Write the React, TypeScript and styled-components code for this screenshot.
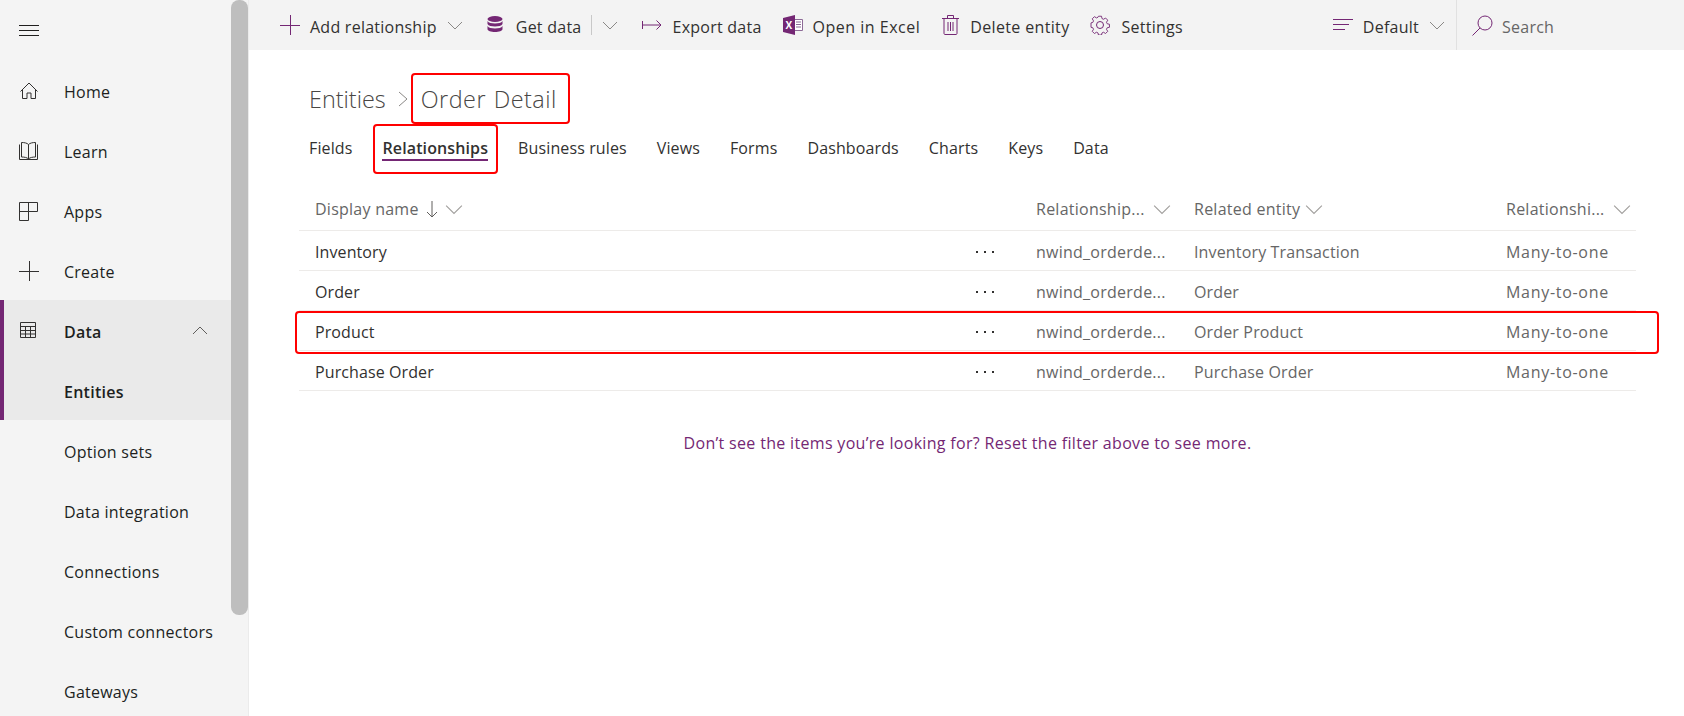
import React from "react";
import styled, { createGlobalStyle } from "styled-components";

const purple = "#742774";

const GlobalStyle = createGlobalStyle`
  html, body {
    margin: 0;
    padding: 0;
    height: 100%;
    overflow: hidden;
    background: #fff;
    font-family: "Open Sans", "Noto Sans", sans-serif;
    font-size: 16px;
    letter-spacing: 0.25px;
  }
  * { box-sizing: border-box; }
`;

const Page = styled.div`
  display: flex;
  width: 1684px;
  height: 716px;
  overflow: hidden;
`;

const Sidebar = styled.aside`
  display: flex;
  flex: 0 0 249px;
  height: 716px;
  overflow: hidden;
  background: #f4f4f4;
  border-right: 1px solid #ebebeb;
`;

const NavList = styled.nav`
  flex: 1 0 0;
  min-width: 0;
`;

const ScrollTrack = styled.div`
  flex: 0 0 17px;
`;

const ScrollThumb = styled.div`
  height: 615px;
  background: #bebebe;
  border-radius: 8px;
`;

const NavRow = styled.div<{ $active?: boolean; $bold?: boolean }>`
  display: flex;
  align-items: center;
  height: 60px;
  padding-top: 2px;
  padding-left: ${(p) => (p.$active ? "15px" : "19px")};
  padding-right: 23px;
  white-space: nowrap;
  font-weight: ${(p) => (p.$bold ? 600 : 400)};
  color: #201f1e;
  background: ${(p) => (p.$active ? "#eaeaea" : "transparent")};
  border-left: ${(p) => (p.$active ? `4px solid ${purple}` : "0")};
`;

const MenuRow = styled(NavRow)`
  padding-top: 0;
`;

const NavIcon = styled.div`
  display: flex;
  flex: 0 0 45px;
  color: #323130;
`;

const NavLabel = styled.span`
  flex: 1 0 0;
  padding-top: 1px;
`;

const Main = styled.main`
  display: flex;
  flex-direction: column;
  flex: 1 0 0;
  min-width: 0;
`;

const Toolbar = styled.header`
  display: flex;
  align-items: center;
  flex: 0 0 50px;
  padding-left: 31px;
  background: #f3f3f3;
  color: #323130;
`;

const ToolItem = styled.div<{ $gap?: number; $space?: number }>`
  display: flex;
  align-items: center;
  gap: ${(p) => p.$gap ?? 10}px;
  margin-right: ${(p) => p.$space ?? 22}px;
  white-space: nowrap;
  color: #323130;
`;

const ToolLabel = styled.span<{ $spacing?: number }>`
  padding-top: 3px;
  letter-spacing: ${(p) => p.$spacing ?? 0.25}px;
`;

const ToolSeparator = styled.div`
  width: 1px;
  height: 20px;
  margin: 0 10px 0 9px;
  background: #c8c8c8;
`;

const ToolSpacer = styled.div`
  flex: 1 0 0;
`;

const SearchBox = styled.div`
  display: flex;
  align-items: center;
  align-self: stretch;
  flex: 0 0 228px;
  gap: 9px;
  padding-left: 15px;
  border-left: 1px solid #e1e1e1;
  color: #666;
`;

const Content = styled.section`
  flex: 1 0 0;
  padding: 24px 48px 0 60px;
`;

const Breadcrumb = styled.div`
  display: flex;
  align-items: center;
  height: 50px;
  font-size: 23.4px;
  letter-spacing: 0;
  font-weight: 300;
  color: #484644;
`;

const Crumb = styled.span`
  margin-right: 11px;
`;

const CurrentCrumb = styled.span`
  position: relative;
  margin-left: 12px;
  letter-spacing: 0.5px;
  word-spacing: 1px;
  &::after {
    content: "";
    position: absolute;
    inset: -10px -13px -9px -10px;
    border: 2px solid #f00;
    border-radius: 4px;
  }
`;

const Tabs = styled.div`
  display: flex;
  gap: 30px;
  height: 47px;
  letter-spacing: 0.12px;
  color: #323130;
`;

const Tab = styled.div<{ $active?: boolean }>`
  position: relative;
  display: flex;
  align-items: center;
  height: 47px;
  font-weight: ${(p) => (p.$active ? 600 : 400)};
  ${(p) =>
    p.$active &&
    `
    &::before {
      content: "";
      position: absolute;
      left: 0;
      right: 0;
      bottom: 10px;
      height: 2px;
      background: ${purple};
    }
    &::after {
      content: "";
      position: absolute;
      inset: 0 -10px -3px -9px;
      border: 2px solid #f00;
      border-radius: 4px;
    }
  `}
`;

const Table = styled.div`
  margin: 19px 0 0 -10px;
`;

const Row = styled.div<{ $head?: boolean }>`
  display: grid;
  grid-template-columns: 676px 61px 158px 312px 1fr;
  align-items: center;
  height: ${(p) => (p.$head ? "41px" : "40px")};
  padding-top: ${(p) => (p.$head ? "0" : "3px")};
  padding-bottom: ${(p) => (p.$head ? "2px" : "0")};
  border-bottom: 1px solid #edebe9;
  color: #666;
`;

const HighlightRow = styled(Row)`
  position: relative;
  &::after {
    content: "";
    position: absolute;
    inset: 0 -23px -4px -4px;
    border: 2px solid #f00;
    border-radius: 4px;
  }
`;

const NameCell = styled.div`
  padding-left: 16px;
  letter-spacing: 0.1px;
  color: #323130;
`;

const TypeCell = styled.div`
  letter-spacing: 0.7px;
`;

const RelatedCell = styled.div`
  letter-spacing: 0.15px;
`;

const HeadCell = styled.div<{ $pad?: number; $gap?: number }>`
  display: flex;
  align-items: center;
  gap: ${(p) => p.$gap ?? 8}px;
  padding-left: ${(p) => p.$pad ?? 0}px;
  color: #666;
`;

const MoreCell = styled.div`
  display: flex;
  gap: 6px;
  padding-left: 1px;
`;

const Dot = styled.span`
  width: 2px;
  height: 2px;
  background: #323130;
`;

const Message = styled.div`
  margin-top: 41px;
  padding-right: 10px;
  text-align: center;
  letter-spacing: 0.32px;
  color: ${purple};
`;

const Stroke = styled.svg`
  display: block;
  flex: none;
  fill: none;
  stroke: currentColor;
  stroke-width: 1;
`;

const Chevron = ({ up, color = "#8a8886", size = 16 }: { up?: boolean; color?: string; size?: number }) => (
  <Stroke width={size} height={size} viewBox="0 0 16 16" style={{ color }}>
    <path d={up ? "M1 11 8 4l7 7" : "M1 5l7 7 7-7"} />
  </Stroke>
);

const Plus = ({ color }: { color: string }) => (
  <Stroke width="20" height="20" viewBox="0 0 20 20" style={{ color }}>
    <path d="M0 10.5h20M10.5 0v20" />
  </Stroke>
);

const navIcons: Record<string, React.ReactNode> = {
  Home: (
    <Stroke width="20" height="20" viewBox="0 0 20 20">
      <path d="M1.500 10.500 10 2l8.500 8.500M3.500 9v8.500H8V12h4v5.500h4.500V9" />
    </Stroke>
  ),
  Learn: (
    <Stroke width="20" height="20" viewBox="0 0 20 20">
      <path d="M.5 3.500v15h18v-15M2.500 1.500v14.500c3 0 5.500.500 7 2 1.500-1.500 4-2 7-2V1.500c-3 0-5.500.500-7 2-1.500-1.500-4-2-7-2ZM9.500 3.500v14.500" />
    </Stroke>
  ),
  Apps: (
    <Stroke width="20" height="20" viewBox="0 0 20 20">
      <path d="M.5 1.500h18v9h-9v9h-9zM9.500 1.500v9M.5 10.500h9" />
    </Stroke>
  ),
  Create: <Plus color="#323130" />,
  Data: (
    <Stroke width="20" height="20" viewBox="0 0 20 20">
      <path d="M1.500 1.500h15v15h-15zM1.500 5.500h15M1.500 9.500h15M1.500 13h15M6.500 5.500v11M11.500 5.500v11" />
    </Stroke>
  ),
};

const navItems = [
  { label: "Home" },
  { label: "Learn" },
  { label: "Apps" },
  { label: "Create" },
  { label: "Data", active: true, bold: true },
  { label: "Entities", active: true, bold: true },
  { label: "Option sets" },
  { label: "Data integration" },
  { label: "Connections" },
  { label: "Custom connectors" },
  { label: "Gateways" },
];

const tabs = ["Fields", "Relationships", "Business rules", "Views", "Forms", "Dashboards", "Charts", "Keys", "Data"];

const rows = [
  { name: "Inventory", related: "Inventory Transaction" },
  { name: "Order", related: "Order" },
  { name: "Product", related: "Order Product", highlight: true },
  { name: "Purchase Order", related: "Purchase Order" },
];

function App() {
  return (
    <Page>
      <GlobalStyle />
      <Sidebar>
        <NavList>
          <MenuRow>
            <Stroke width="20" height="20" viewBox="0 0 20 20" style={{ color: "#201f1e" }}>
              <path d="M0 5.500h20M0 10.500h20M0 15.500h20" />
            </Stroke>
          </MenuRow>
          {navItems.map((item) => (
            <NavRow key={item.label} $active={item.active} $bold={item.bold}>
              <NavIcon>{navIcons[item.label]}</NavIcon>
              <NavLabel>{item.label}</NavLabel>
              {item.label === "Data" && <Chevron up color="#605e5c" />}
            </NavRow>
          ))}
        </NavList>
        <ScrollTrack>
          <ScrollThumb />
        </ScrollTrack>
      </Sidebar>
      <Main>
        <Toolbar>
          <ToolItem $space={24}>
            <Plus color={purple} />
            <ToolLabel>Add relationship</ToolLabel>
            <Chevron />
          </ToolItem>
          <ToolItem $gap={13} $space={0}>
            <svg width="16" height="20" viewBox="0 0 16 20" fill={purple}>
              <ellipse cx="8" cy="4" rx="7.500" ry="3" />
              <path d="M.5 6c1 1.800 4 2.500 7.500 2.500S14.500 7.800 15.500 6v3c-1 1.800-4 2.500-7.500 2.500S1.500 10.800.5 9zM.5 11c1 1.800 4 2.500 7.500 2.500s6.500-.7 7.500-2.500v3c0 1.800-3.500 3-7.500 3s-7.500-1.200-7.500-3z" />
            </svg>
            <ToolLabel>Get data</ToolLabel>
          </ToolItem>
          <ToolSeparator />
          <ToolItem $space={24}>
            <Chevron />
          </ToolItem>
          <ToolItem $gap={11} $space={21}>
            <Stroke width="20" height="20" viewBox="0 0 20 20" style={{ color: purple }}>
              <path d="M.5 6v8M1 10h18M14.500 5.500 19 10l-4.500 4.500" />
            </Stroke>
            <ToolLabel>Export data</ToolLabel>
          </ToolItem>
          <ToolItem $space={22}>
            <svg width="20" height="20" viewBox="0 0 20 20">
              <path d="M11 4.500h8.500v11H11z" fill="#fff" stroke="#8d6a96" />
              <path d="M13 7h5M13 9.500h5M13 12h5" stroke="#8d6a96" />
              <path d="M0 3 12 0v20L0 17z" fill={purple} />
              <text x="2.600" y="14" fontSize="10" fontWeight="700" fill="#fff" fontFamily="Open Sans, sans-serif">
                X
              </text>
            </svg>
            <ToolLabel $spacing={0.5}>Open in Excel</ToolLabel>
          </ToolItem>
          <ToolItem $gap={11} $space={20}>
            <Stroke width="17" height="20" viewBox="0 0 17 20" style={{ color: purple }}>
              <path d="M0 3.500h17M5.500 3.500v-3h6v3M2 3.500v15c0 .6.500 1 1 1h11c.5 0 1-.4 1-1v-15M6 7v9M8.500 7v9M11 7v9" />
            </Stroke>
            <ToolLabel $spacing={0.35}>Delete entity</ToolLabel>
          </ToolItem>
          <ToolItem $gap={12}>
            <Stroke width="20" height="20" viewBox="0 0 20 20" style={{ color: purple }}>
              <path d="M8.300.8h3.400l.5 2.600 1.700.8 2.300-1.400 2.400 2.400-1.400 2.300.8 1.700 2.500.5v3.400l-2.500.5-.8 1.700 1.400 2.300-2.400 2.400-2.300-1.400-1.700.8-.5 2.300H8.300l-.5-2.300-1.700-.8-2.300 1.400-2.400-2.400 1.400-2.300-.8-1.700-2-.5V8.200l2-.5.8-1.700-1.400-2.300 2.400-2.400 2.300 1.400 1.700-.8z" transform="translate(1 .5) scale(.9)" />
              <circle cx="10" cy="10" r="3.500" />
            </Stroke>
            <ToolLabel>Settings</ToolLabel>
          </ToolItem>
          <ToolSpacer />
          <ToolItem $space={11}>
            <Stroke width="20" height="20" viewBox="0 0 20 20" style={{ color: purple }}>
              <path d="M0 4.500h20M0 9.500h16M0 14.500h12" />
            </Stroke>
            <ToolLabel>Default</ToolLabel>
            <Chevron />
          </ToolItem>
          <SearchBox>
            <Stroke width="21" height="21" viewBox="0 0 21 21" style={{ color: purple }}>
              <circle cx="13" cy="8" r="7" />
              <path d="M8 13 .5 20.500" />
            </Stroke>
            <ToolLabel>Search</ToolLabel>
          </SearchBox>
        </Toolbar>
        <Content>
          <Breadcrumb>
            <Crumb>Entities</Crumb>
            <Stroke width="12" height="18" viewBox="0 0 12 18" style={{ color: "#8a8886" }}>
              <path d="M2 2l8 7-8 7" />
            </Stroke>
            <CurrentCrumb>Order Detail</CurrentCrumb>
          </Breadcrumb>
          <Tabs>
            {tabs.map((tab) => (
              <Tab key={tab} $active={tab === "Relationships"}>
                {tab}
              </Tab>
            ))}
          </Tabs>
          <Table>
            <Row $head>
              <HeadCell $pad={16} $gap={6}>
                Display name
                <Stroke width="14" height="20" viewBox="0 0 14 20" style={{ color: "#605e5c" }}>
                  <path d="M7 2v16M2 13l5 5 5-5" />
                </Stroke>
                <Chevron color="#a19f9d" size={18} />
              </HeadCell>
              <div />
              <HeadCell>
                Relationship...
                <Chevron color="#a19f9d" size={18} />
              </HeadCell>
              <HeadCell $gap={5}>
                Related entity
                <Chevron color="#a19f9d" size={18} />
              </HeadCell>
              <HeadCell>
                Relationshi...
                <Chevron color="#a19f9d" size={18} />
              </HeadCell>
            </Row>
            {rows.map((row) => {
              const Line = row.highlight ? HighlightRow : Row;
              return (
                <Line key={row.name}>
                  <NameCell>{row.name}</NameCell>
                  <MoreCell>
                    <Dot />
                    <Dot />
                    <Dot />
                  </MoreCell>
                  <div>nwind_orderde...</div>
                  <RelatedCell>{row.related}</RelatedCell>
                  <TypeCell>Many-to-one</TypeCell>
                </Line>
              );
            })}
          </Table>
          <Message>Don’t see the items you’re looking for? Reset the filter above to see more.</Message>
        </Content>
      </Main>
    </Page>
  );
}

export default App;
